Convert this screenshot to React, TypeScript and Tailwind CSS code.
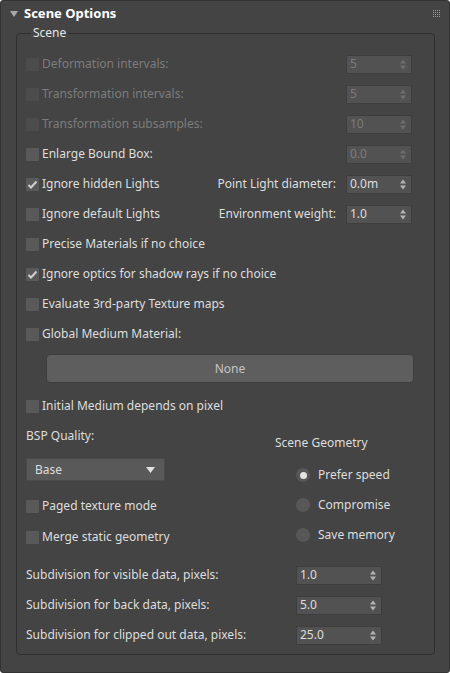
import React from 'react';

const FONT = { fontFamily: '"Noto Sans", "Liberation Sans", sans-serif' };

function Check({ checked, disabled }: { checked?: boolean; disabled?: boolean }) {
  return (
    <span
      className={`w-[13px] h-[13px] shrink-0 flex items-center justify-center rounded-[1px] ${
        disabled ? 'bg-[#4c4c4c]' : 'bg-[#595959]'
      }`}
    >
      {checked && (
        <svg width="11" height="11" viewBox="0 0 11 11">
          <path d="M1.5 6 L4 8.5 L9.5 2.5" fill="none" stroke="#d0d0d0" strokeWidth="2" />
        </svg>
      )}
    </span>
  );
}

function CheckRow({ label, checked, disabled, right }: { label: string; checked?: boolean; disabled?: boolean; right?: React.ReactNode }) {
  return (
    <div className="h-[30px] flex items-center">
      <Check checked={checked} disabled={disabled} />
      <span className={`ml-[3px] ${disabled ? 'text-[#7c7c7c]' : 'text-[#dedede]'}`}>{label}</span>
      {right && <div className="ml-auto flex items-center">{right}</div>}
    </div>
  );
}

function Spinner({ value, disabled, width = 'w-[66px]' }: { value: string; disabled?: boolean; width?: string }) {
  return (
    <div
      className={`${width} h-[19px] flex items-center justify-between pl-[3px] pr-[5px] bg-[#525252] border border-[#3e3e3e] ${
        disabled ? 'text-[#7c7c7c]' : 'text-[#dedede]'
      }`}
    >
      <span className="leading-none">{value}</span>
      <svg width="6" height="11" viewBox="0 0 6 11">
        <path d="M0 4.5 L3 0.5 L6 4.5 Z" fill={disabled ? '#6e6e6e' : '#b4b4b4'} />
        <path d="M0 6.5 L3 10.5 L6 6.5 Z" fill={disabled ? '#6e6e6e' : '#b4b4b4'} />
      </svg>
    </div>
  );
}

function Radio({ label, selected }: { label: string; selected?: boolean }) {
  return (
    <div className="h-[30px] flex items-center pl-[21px]">
      <span className="w-[14px] h-[14px] rounded-full bg-[#575757] flex items-center justify-center">
        {selected && <span className="w-[7px] h-[7px] rounded-full bg-[#e4e4e4]" />}
      </span>
      <span className="ml-[8px] text-[#dedede]">{label}</span>
    </div>
  );
}

function Grip() {
  const dots = Array.from({ length: 16 });
  return (
    <div className="grid grid-cols-4 gap-[1px] w-[7px]">
      {dots.map((_, i) => (
        <span key={i} className="w-[1px] h-[1px] bg-[#9a9a9a]" />
      ))}
    </div>
  );
}

export default function App() {
  return (
    <div
      style={FONT}
      className="w-[450px] h-[673px] bg-[#444444] border border-[#333333] rounded-[3px] text-[12px] text-[#dedede] flex flex-col overflow-hidden"
    >
      {/* Header */}
      <div className="h-[25px] flex items-center pl-[9px] pr-[9px]">
        <svg width="8" height="6" viewBox="0 0 8 6">
          <path d="M0 0 L8 0 L4 6 Z" fill="#a8a8a8" />
        </svg>
        <span className="ml-[6px] text-[13px] font-bold text-white">Scene Options</span>
        <div className="ml-auto">
          <Grip />
        </div>
      </div>

      {/* Group */}
      <fieldset className="ml-[15px] mr-[14px] border border-[#2e2e2e] rounded-[4px] pl-[9px] pr-[22px] pb-[4px]">
        <legend className="ml-[5px] px-[2px] leading-[14px] text-[12px] text-[#e6e6e6]">Scene</legend>
        <div className="pt-[9px] flex flex-col">
          <CheckRow label="Deformation intervals:" disabled right={<Spinner value="5" disabled />} />
          <CheckRow label="Transformation intervals:" disabled right={<Spinner value="5" disabled />} />
          <CheckRow label="Transformation subsamples:" disabled right={<Spinner value="10" disabled />} />
          <CheckRow label="Enlarge Bound Box:" right={<Spinner value="0.0" disabled />} />
          <CheckRow
            label="Ignore hidden Lights"
            checked
            right={
              <>
                <span className="mr-[10px]">Point Light diameter:</span>
                <Spinner value="0.0m" />
              </>
            }
          />
          <CheckRow
            label="Ignore default Lights"
            right={
              <>
                <span className="mr-[10px]">Environment weight:</span>
                <Spinner value="1.0" />
              </>
            }
          />
          <CheckRow label="Precise Materials if no choice" />
          <CheckRow label="Ignore optics for shadow rays if no choice" checked />
          <CheckRow label="Evaluate 3rd-party Texture maps" />
          <CheckRow label="Global Medium Material:" />

          <div className="mt-[5px] ml-[20px] mr-[-2px] h-[29px] rounded-[4px] bg-[#5e5e5e] border border-[#3d3d3d] flex items-center justify-center text-[#c4c4c4]">
            None
          </div>

          <div className="mt-[8px]">
            <CheckRow label="Initial Medium depends on pixel" />
          </div>

          <div className="flex">
            <div className="w-[249px] flex flex-col">
              <div className="h-[30px] flex items-center">BSP Quality:</div>
              <div className="mt-[7px] w-[139px] h-[23px] bg-[#595959] border border-[#4a4a4a] flex items-center justify-between pl-[8px] pr-[9px]">
                <span>Base</span>
                <svg width="9" height="6" viewBox="0 0 9 6">
                  <path d="M0 0 L9 0 L4.5 6 Z" fill="#e0e0e0" />
                </svg>
              </div>
              <div className="mt-[10px]">
                <CheckRow label="Paged texture mode" />
              </div>
              <div className="mt-[1px]">
                <CheckRow label="Merge static geometry" />
              </div>
            </div>
            <div className="flex flex-col pt-[7px]">
              <div className="h-[30px] flex items-center">Scene Geometry</div>
              <div className="mt-[2px]">
                <Radio label="Prefer speed" selected />
                <Radio label="Compromise" />
                <Radio label="Save memory" />
              </div>
            </div>
          </div>

          <div className="mt-[8px] flex flex-col">
            {[
              ['Subdivision for visible data, pixels:', '1.0'],
              ['Subdivision for back data, pixels:', '5.0'],
              ['Subdivision for clipped out data, pixels:', '25.0'],
            ].map(([label, value]) => (
              <div key={label} className="h-[30px] flex items-center">
                <span className="w-[270px]">{label}</span>
                <Spinner value={value} width="w-[86px]" />
              </div>
            ))}
          </div>
        </div>
      </fieldset>
    </div>
  );
}
